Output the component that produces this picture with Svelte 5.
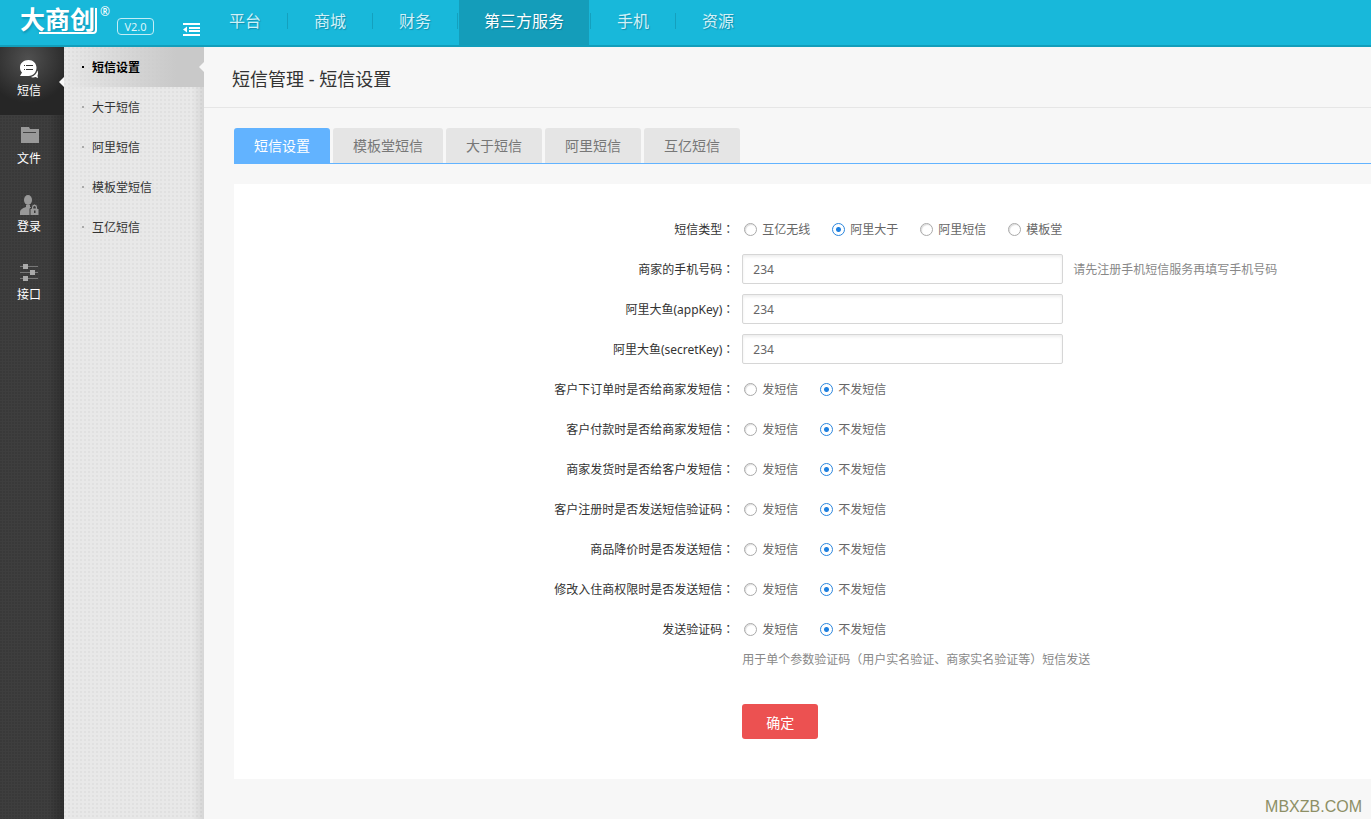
<script>
  const topNav = ['平台', '商城', '财务', '第三方服务', '手机', '资源'];
  const modules = [
    { label: '短信', icon: 'chat' },
    { label: '文件', icon: 'folder' },
    { label: '登录', icon: 'user' },
    { label: '接口', icon: 'sliders' }
  ];
  const sideLinks = ['短信设置', '大于短信', '阿里短信', '模板堂短信', '互亿短信'];
  const tabs = ['短信设置', '模板堂短信', '大于短信', '阿里短信', '互亿短信'];
  const types = ['互亿无线', '阿里大于', '阿里短信', '模板堂'];
  const choices = ['发短信', '不发短信'];

  let smsType = $state('阿里大于');
  let fields = $state([
    { id: 'mobile', label: '商家的手机号码', value: '234', hint: '请先注册手机短信服务再填写手机号码' },
    { id: 'app-key', label: '阿里大鱼(appKey)', value: '234' },
    { id: 'secret-key', label: '阿里大鱼(secretKey)', value: '234' }
  ]);
  let switches = $state([
    { id: 'order', label: '客户下订单时是否给商家发短信', value: '不发短信' },
    { id: 'pay', label: '客户付款时是否给商家发短信', value: '不发短信' },
    { id: 'ship', label: '商家发货时是否给客户发短信', value: '不发短信' },
    { id: 'signup', label: '客户注册时是否发送短信验证码', value: '不发短信' },
    { id: 'price', label: '商品降价时是否发送短信', value: '不发短信' },
    { id: 'seller', label: '修改入住商权限时是否发送短信', value: '不发短信' },
    { id: 'code', label: '发送验证码', value: '不发短信' }
  ]);
</script>

<div class="page">
  <header class="top">
    <div class="brand">
      <a class="logo" href="#home">
        <span class="name">大商创</span>
        <svg class="swash" width="60" height="28" viewBox="0 0 60 28" aria-hidden="true">
          <path d="M0 26H54Q57 26 57 23V1" fill="none" stroke="#fff" stroke-width="2" />
        </svg>
      </a>
      <span class="reg">®</span>
      <span class="version">V2.0</span>
      <button class="fold" aria-label="收起菜单">
        <svg width="18" height="14" viewBox="0 0 18 14" fill="#fff" aria-hidden="true">
          <path d="M0 0H17V2H0zM6 4H17V6H6zM6 7H17V9H6zM0 11H17V13H0zM0 6.5L4 3.5V9.5z" />
        </svg>
      </button>
    </div>
    <nav>
      {#each topNav as item, i}
        <div class="cell"><a href="#top{i}" class:on={i === 3}>{item}</a></div>
      {/each}
    </nav>
  </header>

  <div class="body">
    <aside class="modules">
      {#each modules as m, i}
        <a href="#m{i}" class:on={i === 0}>
          <svg width="20" height="20" viewBox="0 0 20 20" aria-hidden="true">
            {#if m.icon === 'chat'}
              <path fill="#fff" d="M9.500 1C4.500 1 1 4.300 1 8.600C1 10.600 1.700 12.300 3 13.600L1 17H9.500C14.500 17 17.500 13 17.500 8.800C17.500 4.300 14 1 9.500 1z" />
              <path fill="#fff" d="M18.300 11.500C17.800 14.500 15.500 17 12 18C14 18.800 15.500 18.500 16.500 18L19 19L18.500 16.500C19.300 15 19.200 13 18.300 11.500z" />
              <path fill="#333" d="M5 6H6V7H5zM7 6H14V7H7zM5 10H6V11H5zM7 10H14V11H7z" />
            {:else if m.icon === 'folder'}
              <path fill="#999" d="M2 0H10L11 2H20V16H2z" />
              <path fill="#444" d="M4 5H17V6H4z" />
            {:else if m.icon === 'user'}
              <ellipse cx="9" cy="5" rx="4" ry="5" fill="#999" />
              <path fill="#999" d="M1 20V17Q1 14 7 12V10H11V12Q16 13 16 16V20z" />
              <path fill="#999" stroke="#3a3a3a" d="M11 20.500V13.500H12.500V12Q12.500 9 15.500 9Q18.500 9 18.500 12V13.500H20V20.500z" />
              <path fill="#3a3a3a" d="M14.200 13.500V12.500Q14.200 11 15.500 11Q16.800 11 16.800 12.500V13.500zM15 15.500H16.500V18H15z" />
            {:else}
              <path fill="#777" d="M1 3H19V4H1zM1 9H19V10H1zM1 15H19V16H1z" />
              <path fill="#aaa" d="M4 1H9V6H4zM11 7H16V12H11zM4 13H9V18H4z" />
            {/if}
          </svg>
          <span>{m.label}</span>
        </a>
      {/each}
    </aside>

    <nav class="links">
      {#each sideLinks as item, i}
        <a href="#s{i}" class:on={i === 0}><i></i><span>{item}</span></a>
      {/each}
    </nav>

    <main>
      <h1>短信管理 - 短信设置</h1>
      <div class="inner">
        <nav class="tabs">
          {#each tabs as item, i}
            <a href="#t{i}" class:on={i === 0}>{item}</a>
          {/each}
        </nav>

        <form onsubmit={(e) => e.preventDefault()}>
          <div class="row" role="radiogroup" aria-labelledby="type-label">
            <span class="label" id="type-label">短信类型<b>：</b></span>
            <div class="choices">
              {#each types as t}
                <label><input type="radio" name="type" value={t} bind:group={smsType} /><span>{t}</span></label>
              {/each}
            </div>
          </div>

          {#each fields as f}
            <div class="row">
              <label class="label" for={f.id}>{f.label}<b>：</b></label>
              <div class="field">
                <input class="text" type="text" id={f.id} bind:value={f.value} />
                {#if f.hint}<span class="hint">{f.hint}</span>{/if}
              </div>
            </div>
          {/each}

          {#each switches as s}
            <div class="row" role="radiogroup" aria-labelledby="{s.id}-label">
              <span class="label" id="{s.id}-label">{s.label}<b>：</b></span>
              <div class="choices">
                {#each choices as c}
                  <label><input type="radio" name={s.id} value={c} bind:group={s.value} /><span>{c}</span></label>
                {/each}
              </div>
            </div>
          {/each}

          <div class="foot">
            <p class="hint">用于单个参数验证码<b>（</b>用户实名验证、商家实名验证等<b>）</b>短信发送</p>
            <button class="submit">确定</button>
          </div>
        </form>
      </div>
    </main>
  </div>

  <div class="mark">MBXZB.COM</div>
</div>

<style>
  :global(body) {
    background: #f7f7f7;
  }
  .page {
    position: relative;
    display: flex;
    flex-direction: column;
    min-height: 100vh;
    font: 12px/20px "Noto Sans", "Noto Sans CJK SC", sans-serif;
    color: #333;
  }
  .page :is(a, button, input) {
    font-family: inherit;
    text-decoration: none;
  }
  .page b {
    font-family: "Noto Sans CJK TC", sans-serif;
    font-weight: 400;
    line-height: 1;
  }

  .top {
    display: flex;
    box-sizing: border-box;
    height: 47px;
    background: #18b8da;
    border-bottom: 2px solid #129ebb;
  }
  .brand {
    display: flex;
    align-items: flex-start;
    box-sizing: border-box;
    width: 203px;
    padding-left: 20px;
    color: #fff;
  }
  .logo {
    position: relative;
    width: 78px;
    padding-top: 5px;
    color: #fff;
    font-size: 25px;
    font-weight: 700;
    line-height: 28px;
    text-shadow: 1px 2px 2px rgba(0, 80, 110, 0.3);
  }
  .swash {
    position: absolute;
    left: 19px;
    top: 7px;
  }
  .reg {
    margin: 2px 0 0 2px;
    width: 11px;
    font-size: 12px;
  }
  .version {
    box-sizing: border-box;
    width: 37px;
    height: 17px;
    margin: 18px 29px 0 6px;
    border: 1px solid #c4edf6;
    border-radius: 4px;
    font-size: 11px;
    line-height: 15px;
    text-align: center;
    color: #dcf5fa;
  }
  .fold {
    margin-top: 23px;
    padding: 0;
    border: 0;
    background: none;
    line-height: 0;
  }
  .top nav {
    display: flex;
  }
  .cell {
    display: flex;
    align-items: flex-start;
  }
  .cell::after {
    content: "";
    width: 1px;
    height: 16px;
    margin-top: 13px;
    background: #14a0be;
  }
  .cell:last-child::after {
    background: none;
  }
  .cell a {
    height: 45px;
    margin: 0 1px;
    padding: 0 25px;
    color: #d1f1f8;
    font-size: 16px;
    line-height: 42px;
    text-shadow: 1px 1px 1px rgba(0, 70, 95, 0.35);
  }
  .cell a.on {
    background: #149dba;
    color: #fff;
  }

  .body {
    display: flex;
    flex: 1;
  }
  .modules {
    width: 64px;
    background:
      linear-gradient(90deg, transparent 48px, rgba(0, 0, 0, 0.25)),
      radial-gradient(circle at 1px 1px, #393939 1px, transparent 1px) 0 0 / 3px 3px,
      #3e3e3e;
  }
  .modules a {
    position: relative;
    display: flex;
    flex-direction: column;
    align-items: center;
    gap: 2px;
    box-sizing: border-box;
    height: 68px;
    padding: 12px 6px 0 0;
    color: #fff;
  }
  .modules a.on {
    background: radial-gradient(circle at 28px 12px, #505050, #262626 44px);
  }
  .modules a.on::after,
  .links a.on::after {
    content: "";
    position: absolute;
    right: 0;
    top: 30px;
    border: 5px solid transparent;
    border-right-color: #f7f7f7;
    border-left-width: 0;
  }
  .links {
    width: 140px;
    background:
      linear-gradient(90deg, transparent 128px, rgba(0, 0, 0, 0.08)),
      radial-gradient(circle at 1px 1px, #e0e0e0 1px, transparent 1px) 0 0 / 4px 4px,
      #e8e8e8;
  }
  .links a {
    position: relative;
    display: flex;
    align-items: center;
    gap: 8px;
    height: 40px;
    padding-left: 18px;
    color: #333;
  }
  .links span,
  .choices span,
  .label,
  .field .hint {
    padding-top: 2px;
  }
  .links i {
    width: 2px;
    height: 2px;
    background: #aaa;
  }
  .links a.on {
    background: linear-gradient(90deg, transparent, #c9c9c9 80%);
    color: #000;
    font-weight: 700;
  }
  .links a.on i {
    background: #000;
  }
  .links a.on::after {
    top: 15px;
  }

  main {
    flex: 1;
    min-width: 0;
  }
  h1 {
    margin: 0;
    padding: 17px 28px 13px;
    border-bottom: 1px solid #e6e6e6;
    font-size: 18px;
    font-weight: 400;
    line-height: 30px;
  }
  .inner {
    padding: 20px 0 40px 30px;
  }
  .tabs {
    display: flex;
    gap: 3px;
    border-bottom: 1px solid #62b3ff;
  }
  .tabs a {
    height: 35px;
    padding: 0 20px;
    border-radius: 3px 3px 0 0;
    background: #e5e5e5;
    color: #777;
    font-size: 14px;
    line-height: 35px;
  }
  .tabs a.on {
    background: #62b3ff;
    color: #fff;
  }

  form {
    margin-top: 20px;
    padding: 25px 0 40px;
    background: #fff;
  }
  .row {
    display: grid;
    grid-template-columns: 44% 1fr;
    gap: 8px;
    align-items: center;
    height: 40px;
  }
  .label {
    text-align: right;
  }
  .choices {
    display: flex;
    gap: 22px;
    padding-left: 2px;
    color: #666;
  }
  .choices label {
    display: flex;
    align-items: center;
    gap: 5px;
  }
  .choices input {
    appearance: none;
    box-sizing: border-box;
    width: 13px;
    height: 13px;
    margin: 0;
    border: 1px solid #aaa;
    border-radius: 50%;
    background: #fff;
    box-shadow: inset 1px 1px 1px #ddd;
  }
  .choices input:checked {
    border-color: #2a86de;
    background: radial-gradient(circle, #1e80e0 2px, #fff 3px);
    box-shadow: none;
  }
  .field {
    display: flex;
    align-items: center;
    gap: 10px;
  }
  .text {
    box-sizing: border-box;
    width: 321px;
    height: 30px;
    padding: 0 10px;
    border: 1px solid #d6d6d6;
    border-radius: 2px;
    box-shadow: inset 0 2px 3px #eee;
    color: #666;
    font-size: 12px;
  }
  .hint {
    margin: 0;
    color: #888;
  }
  .foot {
    margin-left: calc(44% + 8px);
    padding-top: 1px;
  }
  .submit {
    width: 76px;
    height: 35px;
    margin-top: 34px;
    padding: 0;
    border: 0;
    border-radius: 3px;
    background: #ec5151;
    color: #fff;
    font-size: 14px;
    display: block;
  }
  .mark {
    position: absolute;
    right: 9px;
    bottom: 2px;
    color: #8d8f66;
    font: 16px/20px "Liberation Sans", sans-serif;
  }
</style>
